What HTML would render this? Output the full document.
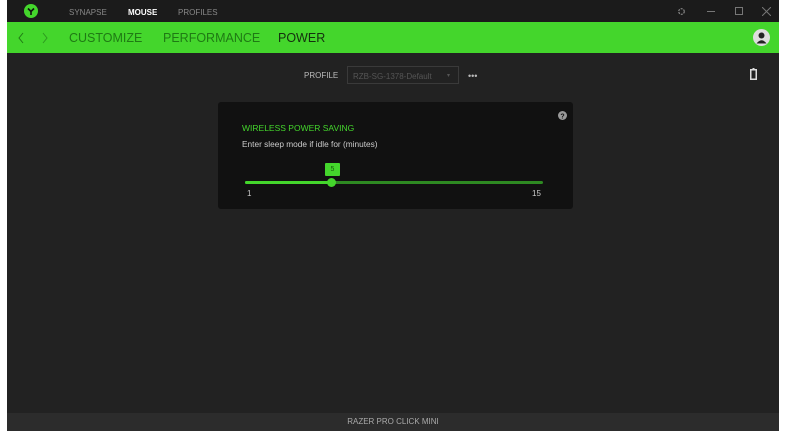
<!DOCTYPE html>
<html><head><meta charset="utf-8"><style>
*{margin:0;padding:0;box-sizing:border-box}
body{width:786px;height:442px;background:#fff;font-family:"Liberation Sans",sans-serif;position:relative;overflow:hidden}
#app{position:absolute;left:7px;top:0;width:772px;height:431px;background:#222}
#title{position:absolute;left:0;top:0;width:772px;height:22px;background:#1b1b1b}
#green{position:absolute;left:0;top:22px;width:772px;height:31px;background:#44d62c}
.t{position:absolute;font-size:8px;color:#888;top:8px}
.g{position:absolute;font-size:12.5px;color:#1f7a14;top:31px}
#foot{position:absolute;left:0;top:413px;width:772px;height:18px;background:#2c2c2c;color:#aaa;font-size:8px;text-align:center;line-height:18px}
#card{position:absolute;left:211px;top:102px;width:355px;height:107px;background:#111;border-radius:3px}
</style></head><body>
<div id="app">
<div id="title"></div>
<svg style="position:absolute;left:17px;top:4px" width="14" height="14" viewBox="0 0 14 14"><circle cx="7" cy="7" r="7" fill="#44d62c"/><path d="M4 4.5L7 7.5L10 4.5M7 7.5V11" stroke="#111" stroke-width="1.6" fill="none"/></svg>
<div class="t" style="left:62px">SYNAPSE</div>
<div class="t" style="left:121px;color:#fff;font-weight:bold">MOUSE</div>
<div class="t" style="left:171px">PROFILES</div>
<svg style="position:absolute;left:670px;top:7px" width="9" height="9"><circle cx="4.5" cy="4.5" r="2.8" stroke="#888" fill="none" stroke-width="1.2" stroke-dasharray="2 1"/></svg>
<div style="position:absolute;left:700px;top:11px;width:8px;height:1px;background:#777"></div>
<div style="position:absolute;left:728px;top:7px;width:8px;height:8px;border:1px solid #777"></div>
<svg style="position:absolute;left:755px;top:7px" width="9" height="9"><path d="M0 0L9 9M9 0L0 9" stroke="#777"/></svg>
<div id="green"></div>
<svg style="position:absolute;left:11px;top:32px" width="30" height="12"><path d="M5 1L1 6L5 11" stroke="#1f7a14" fill="none"/><path d="M25 1L29 6L25 11" stroke="#2d9a1f" fill="none"/></svg>
<div class="g" style="left:62px">CUSTOMIZE</div>
<div class="g" style="left:156px">PERFORMANCE</div>
<div class="g" style="left:271px;color:#15300f">POWER</div>
<svg style="position:absolute;left:746px;top:29px" width="17" height="17"><circle cx="8.5" cy="8.5" r="8.5" fill="#ddd"/><circle cx="8.5" cy="6.5" r="3" fill="#222"/><path d="M3.5 14.5Q8.5 8 13.5 14.5" fill="#222"/></svg>
<div style="position:absolute;left:297px;top:71px;font-size:8px;color:#bbb">PROFILE</div>
<div style="position:absolute;left:340px;top:66px;width:112px;height:18px;border:1px solid #3a3a3a;font-size:8px;color:#555;padding:5px 5px">RZB-SG-1378-Default<span style="position:absolute;right:8px;font-size:6px">▾</span></div>
<div style="position:absolute;left:461px;top:71px;font-size:9px;color:#bbb">•••</div>
<svg style="position:absolute;left:743px;top:68px" width="7" height="12"><rect x="2.5" y="0" width="2" height="2" fill="#ddd"/><rect x="0.75" y="1.75" width="5.5" height="9.5" stroke="#ddd" stroke-width="1.5" fill="none"/></svg>
<div id="card">
<svg style="position:absolute;left:340px;top:9px" width="9" height="9"><circle cx="4.5" cy="4.5" r="4.5" fill="#999"/><text x="4.5" y="7.5" font-size="7" text-anchor="middle" fill="#111" font-family="Liberation Sans" font-weight="bold">?</text></svg>
<div style="position:absolute;left:24px;top:21px;font-size:8.5px;color:#44d62c">WIRELESS POWER SAVING</div>
<div style="position:absolute;left:24px;top:37px;font-size:8.3px;color:#ccc">Enter sleep mode if idle for (minutes)</div>
<div style="position:absolute;left:107px;top:61px;width:15px;height:13px;background:#44d62c;color:#1a5a10;font-size:7px;text-align:center;line-height:13px;border-radius:1px">5</div>
<div style="position:absolute;left:27px;top:79px;width:298px;height:3px;background:#2e8a22;border-radius:2px"></div>
<div style="position:absolute;left:27px;top:79px;width:87px;height:3px;background:#44d62c;border-radius:2px"></div>
<div style="position:absolute;left:109px;top:76px;width:9px;height:9px;background:#44d62c;border-radius:50%"></div>
<div style="position:absolute;left:29px;top:87px;font-size:8px;color:#ccc">1</div>
<div style="position:absolute;left:314px;top:87px;font-size:8px;color:#ccc">15</div>
</div>
<div id="foot">RAZER PRO CLICK MINI</div>
</div>
</body></html>
